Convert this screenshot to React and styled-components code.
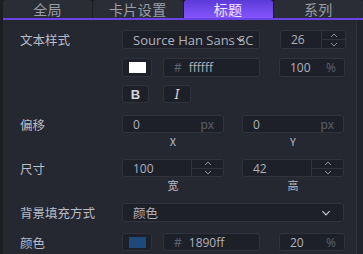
import styled, { createGlobalStyle } from "styled-components";

const GlobalStyle = createGlobalStyle`
  body {
    margin: 0;
    background: #1b1d23;
    font-family: "Noto Sans CJK SC", "Noto Sans", sans-serif;
  }
`

const Frame = styled.div`
  width: 363px;
  height: 254px;
  overflow: hidden;
  display: flex;
  flex-direction: column;
  padding-left: 3px;
  box-sizing: border-box;
  background: #1b1d23;
`
const TabBar = styled.div`
  display: flex;
  height: 18px;
  border-bottom: 2px solid #6a43e4;
`
const Tab = styled.div`
  flex: 1;
  display: flex;
  align-items: center;
  justify-content: center;
  font-size: 14px;
  letter-spacing: 0.5px;
  color: ${p => (p.$active ? "#ece8ff" : "#9a9ea8")};
  background: ${p => (p.$active ? "linear-gradient(#5c3ad8, #8556ff)" : "#2b2d36")};
  border-radius: 3px 3px 0 0;
  margin-right: 1px;
  &:last-child { margin-right: 0; }
`
const Body = styled.div`
  flex: 1;
  display: flex;
`
const Panel = styled.div`
  flex: 1;
  background: #252731;
  padding: 10px 0 0 17px;
  border-right: 1px solid #30323c;
`
const Scroll = styled.div`
  width: 6px;
  background: #22242d;
`
const Row = styled.div`
  display: flex;
  align-items: center;
  height: ${p => p.$h || 19}px;
  margin-top: ${p => p.$gap || 0}px;
`
const Label = styled.div`
  width: 102px;
  font-size: 12.5px;
  color: #b9bdc7;
`
const Controls = styled.div`
  display: flex;
  align-items: center;
  height: 100%;
`
const Box = styled.div`
  position: relative;
  box-sizing: border-box;
  height: 100%;
  width: ${p => p.$w}px;
  margin-left: ${p => p.$ml || 0}px;
  background: #1e2029;
  border: 1px solid #30333d;
  border-radius: 3px;
  display: flex;
  align-items: center;
  padding-left: 10px;
  font-family: "Open Sans", "Noto Sans CJK SC", sans-serif;
  font-size: ${p => p.$fs || 12}px;
  color: #aeb2bc;
  overflow: hidden;
  white-space: nowrap;
`
const Value = styled.span`
  flex: 1;
  overflow: hidden;
`
const Unit = styled.span`
  color: #5e626d;
  font-size: 12px;
  margin-right: ${p => p.$mr || 9}px;
`
const Hash = styled.span`
  color: #5e626d;
  margin-right: 7px;
`
const Swatch = styled.div`
  box-sizing: border-box;
  width: 30px;
  height: 100%;
  border: 1px solid #30333d;
  border-radius: 3px;
  background: #1e2029;
  display: flex;
  align-items: center;
  justify-content: center;
  &::after {
    content: "";
    width: 17px;
    height: 11px;
    background: ${p => p.$color};
  }
`
const StyleBtn = styled.div`
  box-sizing: border-box;
  width: ${p => p.$w}px;
  height: 100%;
  margin-left: ${p => p.$ml || 0}px;
  border: 1px solid #30333d;
  border-radius: 3px;
  background: #1e2029;
  display: flex;
  align-items: center;
  justify-content: center;
  color: #d3d6de;
  font-size: 13px;
`
const Bold = styled.span`
  font-family: "Liberation Sans", sans-serif;
  font-weight: bold;
`
const Italic = styled.span`
  font-family: "DejaVu Serif", serif;
  font-style: italic;
`
const Spinner = styled.div`
  width: ${p => p.$w}px;
  height: 100%;
  border-left: 1px solid #30333d;
  display: flex;
  flex-direction: column;
  & > div {
    flex: 1;
    display: flex;
    align-items: center;
    justify-content: center;
  }
  & > div + div {
    border-top: 1px solid #30333d;
  }
`
const SelectArrow = styled.div`
  position: absolute;
  right: ${p => p.$r}px;
  top: 0;
  bottom: 0;
  display: flex;
  align-items: center;
`
const SubRow = styled.div`
  display: flex;
  height: 12px;
  margin-top: 2px;
  padding-left: 102px;
`
const SubLabel = styled.div`
  width: ${p => p.$w}px;
  margin-right: ${p => p.$mr || 0}px;
  text-align: center;
  font-size: 11px;
  line-height: 12px;
  color: #b9bdc7;
`

const Chevron = ({ up, size = 8, color = "#8a8e98" }) => (
  <svg width={size} height={size / 2 + 1} viewBox="0 0 8 5">
    <path d={up ? "M1 4 L4 1 L7 4" : "M1 1 L4 4 L7 1"} fill="none" stroke={color} strokeWidth="1" />
  </svg>
)

const Spin = ({ w }) => (
  <Spinner $w={w}>
    <div><Chevron up /></div>
    <div><Chevron /></div>
  </Spinner>
)

export default function App() {
  return (
    <Frame>
      <GlobalStyle />
      <TabBar>
        <Tab>全局</Tab>
        <Tab>卡片设置</Tab>
        <Tab $active>标题</Tab>
        <Tab>系列</Tab>
      </TabBar>
      <Body>
        <Panel>
          <Row>
            <Label>文本样式</Label>
            <Controls>
              <Box $w={138} $fs={13}>
                <Value>Source Han Sans SC</Value>
                <SelectArrow $r={14}><Chevron size={9} color="#c6cad3" /></SelectArrow>
              </Box>
              <Box $w={66} $ml={20}>
                <Value>26</Value>
                <Spin w={23} />
              </Box>
            </Controls>
          </Row>
          <Row $gap={9}>
            <Label />
            <Controls>
              <Swatch $color="#ffffff" />
              <Box $w={97} $ml={11}>
                <Hash>#</Hash>
                <Value>ffffff</Value>
              </Box>
              <Box $w={66} $ml={19}>
                <Value>100</Value>
                <Unit $mr={8}>%</Unit>
              </Box>
            </Controls>
          </Row>
          <Row $gap={8} $h={18}>
            <Label />
            <Controls>
              <StyleBtn $w={27}><Bold>B</Bold></StyleBtn>
              <StyleBtn $w={28} $ml={14}><Italic>I</Italic></StyleBtn>
            </Controls>
          </Row>
          <Row $gap={12} $h={18}>
            <Label>偏移</Label>
            <Controls>
              <Box $w={102}>
                <Value>0</Value>
                <Unit>px</Unit>
              </Box>
              <Box $w={102} $ml={18}>
                <Value>0</Value>
                <Unit>px</Unit>
              </Box>
            </Controls>
          </Row>
          <SubRow>
            <SubLabel $w={102} $mr={18}>X</SubLabel>
            <SubLabel $w={102}>Y</SubLabel>
          </SubRow>
          <Row $gap={12} $h={18}>
            <Label>尺寸</Label>
            <Controls>
              <Box $w={102}>
                <Value>100</Value>
                <Spin w={31} />
              </Box>
              <Box $w={102} $ml={18}>
                <Value>42</Value>
                <Spin w={31} />
              </Box>
            </Controls>
          </Row>
          <SubRow>
            <SubLabel $w={102} $mr={18}>宽</SubLabel>
            <SubLabel $w={102}>高</SubLabel>
          </SubRow>
          <Row $gap={12}>
            <Label>背景填充方式</Label>
            <Controls>
              <Box $w={222} $fs={12.5}>
                <Value>颜色</Value>
                <SelectArrow $r={12}><Chevron size={10} color="#c6cad3" /></SelectArrow>
              </Box>
            </Controls>
          </Row>
          <Row $gap={11} $h={18}>
            <Label>颜色</Label>
            <Controls>
              <Swatch $color="#1d4a78" />
              <Box $w={97} $ml={11}>
                <Hash>#</Hash>
                <Value>1890ff</Value>
              </Box>
              <Box $w={66} $ml={19}>
                <Value>20</Value>
                <Unit $mr={8}>%</Unit>
              </Box>
            </Controls>
          </Row>
        </Panel>
        <Scroll />
      </Body>
    </Frame>
  );
}
